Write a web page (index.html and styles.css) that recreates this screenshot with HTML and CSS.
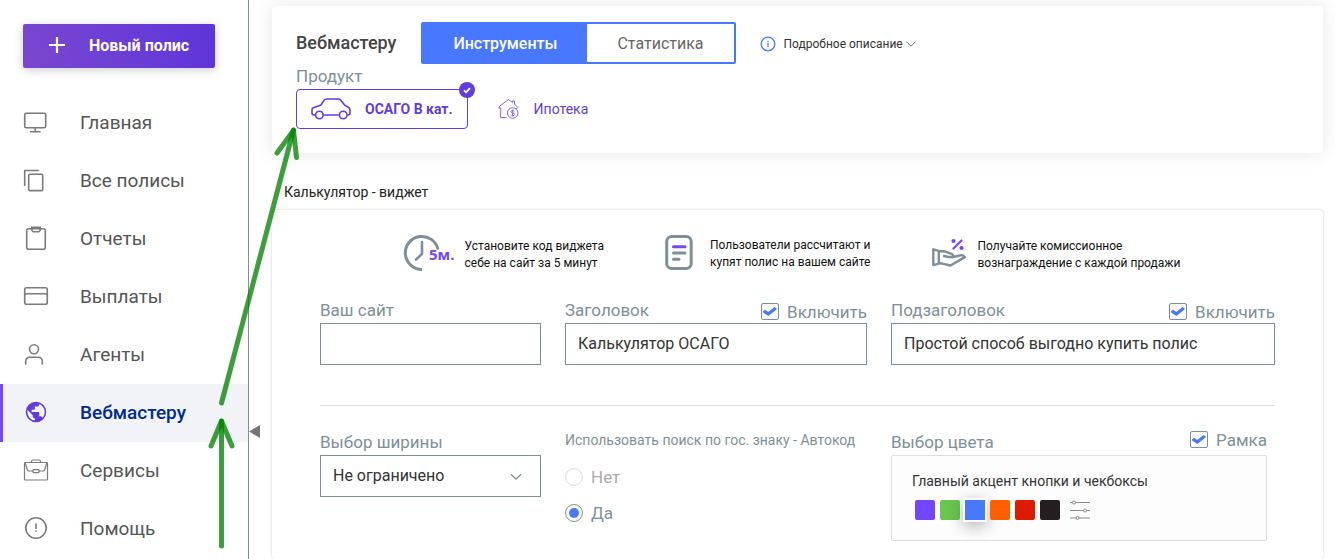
FILE: index.html
```html
<!DOCTYPE html>
<html lang="ru">
<head>
<meta charset="utf-8">
<meta name="viewport" content="width=device-width, initial-scale=1">
<title>Вебмастеру</title>
<link rel="stylesheet" href="styles.css">
</head>
<body>
<div class="layout">
  <aside class="sidebar">
    <button class="new-policy" type="button">
      <svg width="18" height="18" viewBox="0 0 18 18" fill="none" stroke="#fff" stroke-width="2.200"><path d="M9 1v16M1 9h16"/></svg>
      Новый полис
    </button>
    <nav class="nav">
      <a class="nav-item" href="#">
        <svg class="nav-icon" width="26" height="26" viewBox="0 0 26 26"><rect x="1.700" y="4.200" width="21" height="14.600" rx="1.500"/><path d="M12.200 19v3.500M7.500 22.800h9.500"/></svg>Главная</a>
      <a class="nav-item" href="#">
        <svg class="nav-icon" width="26" height="26" viewBox="0 0 26 26"><rect x="5.700" y="7.200" width="14" height="16.400" rx="1.200"/><path d="M1.700 18.500V3.500h13.500"/></svg>Все полисы</a>
      <a class="nav-item" href="#">
        <svg class="nav-icon" width="26" height="26" viewBox="0 0 26 26"><rect x="3.700" y="3.800" width="18.600" height="20.400" rx="2"/><path d="M8.800 2.400h8.400v2.800l-1.400 1.600h-5.600L8.800 5.200z"/></svg>Отчеты</a>
      <a class="nav-item" href="#">
        <svg class="nav-icon" width="26" height="26" viewBox="0 0 26 26"><rect x="1.700" y="4.700" width="22.600" height="16.600" rx="2"/><path d="M2 10.800h22"/></svg>Выплаты</a>
      <a class="nav-item" href="#">
        <svg class="nav-icon" width="26" height="26" viewBox="0 0 26 26"><circle cx="11" cy="8.300" r="4.500"/><path d="M2.700 23v-2.800a4 4 0 0 1 4-4h8.600a4 4 0 0 1 4 4V23"/></svg>Агенты</a>
      <a class="nav-item nav-item-active" href="#" aria-current="page">
        <svg class="nav-icon nav-icon-solid" width="26" height="26" viewBox="0 0 24 24"><path d="M12 2.500a9.500 9.500 0 1 0 0 19 9.500 9.500 0 0 0 0-19zm-1 17.400a7.900 7.900 0 0 1-7-7.900c0-.6.1-1.200.2-1.800L9 15v1c0 1.100.9 2 2 2v1.900zm6.900-2.500c-.3-.8-1-1.400-1.900-1.400h-1v-3c0-.6-.4-1-1-1H8v-2h2c.6 0 1-.4 1-1V7h2c1.100 0 2-.9 2-2v-.4a8 8 0 0 1 2.900 12.800z"/></svg>Вебмастеру</a>
      <a class="nav-item" href="#">
        <svg class="nav-icon nav-icon-thin" width="26" height="26" viewBox="0 0 26 26"><rect x="1.500" y="5.500" width="23" height="17.500" rx="1"/><path d="M8.500 5.500V4.300a1.300 1.300 0 0 1 1.300-1.300h6.400a1.300 1.300 0 0 1 1.300 1.300v1.200M2 5.500l2.300 7.300c.3.900.9 1.200 1.800 1.200H10M24 5.500l-2.300 7.300c-.3.900-.9 1.200-1.800 1.200H16"/><rect x="10" y="12.700" width="6" height="3" rx=".8"/></svg>Сервисы</a>
      <a class="nav-item" href="#">
        <svg class="nav-icon nav-icon-help" width="26" height="26" viewBox="0 0 26 26"><circle cx="13" cy="13" r="10.200"/><path d="M13 8.500v5.500M13 15.500v1.600"/></svg>Помощь</a>
    </nav>
    <button class="collapse" type="button" aria-label="Свернуть меню"></button>
  </aside>

  <main class="main">
    <section class="card header-card">
      <div class="header-row">
        <h1 class="title">Вебмастеру</h1>
        <div class="tabs">
          <button class="tab tab-active" type="button">Инструменты</button>
          <button class="tab" type="button">Статистика</button>
        </div>
        <button class="details" type="button">
          <svg width="16" height="16" viewBox="0 0 16 16" fill="none" stroke="#4778ff" stroke-width="1.300"><circle cx="8" cy="8" r="6.800"/><path d="M8 7v4.200M8 4.800v1.400"/></svg>
          <span>Подробное описание</span>
          <svg class="details-chevron" width="10" height="6" viewBox="0 0 10 6" fill="none" stroke="#777" stroke-width="1"><path d="M.5.700l4.500 4.500L9.500.700"/></svg>
        </button>
      </div>
      <p class="product-label">Продукт</p>
      <div class="products">
        <button class="product product-active" type="button">
          <svg width="40" height="22" viewBox="0 0 40 22" fill="none" stroke="#613ddb" stroke-width="1.600" stroke-linejoin="round"><path d="M4.300 17H3Q1 17 1 15v-3.200Q1 10 3 9.500L10 7l3-4.600Q14 1 15.700 1h11.600q1.500 0 2.500 1.200L34 7.400l3.300 1.800Q39 10.200 39 12v3q0 2-2 2h-.7M12.500 17h15.300"/><circle cx="8.400" cy="17" r="3.800"/><circle cx="32.200" cy="17" r="3.800"/></svg>
          ОСАГО В кат.
          <span class="badge"><svg width="16" height="16" viewBox="0 0 16 16" fill="none" stroke="#fff" stroke-width="1.800"><path d="M5 8.300l2 2 4-4.200"/></svg></span>
        </button>
        <button class="product" type="button">
          <svg width="22" height="22" viewBox="0 0 22 22" fill="none" stroke="#8267e2" stroke-width="1"><path d="M8.500 19.500H2.700V10H.8l1-2L10.500 1.500 14.500 4.500V3h2v3l3.300 3.500-.7 1H17"/><circle cx="14.700" cy="15" r="5.300"/><path d="M16.500 13.300q-.7-.8-1.800-.8-1.700 0-1.700 1.200t1.700 1.300q1.900.2 1.900 1.400 0 1.300-1.900 1.300-1.300 0-1.900-1M14.700 11.500v7"/></svg>
          Ипотека
        </button>
      </div>
    </section>

    <h2 class="section-title">Калькулятор - виджет</h2>

    <form class="card widget-card">
      <div class="features">
        <div class="feature">
          <svg width="54" height="38" viewBox="0 0 54 38"><path d="M19 35.400A16.500 16.500 0 1 1 35 15.500" fill="none" stroke="#7e9097" stroke-width="3"/><path d="M19 8v12l-6 5.500" fill="none" stroke="#7e9097" stroke-width="2.600" stroke-linecap="round"/><text class="clock-text" x="26" y="26">5м.</text></svg>
          <p>Установите код виджета<br>себе на сайт за 5 минут</p>
        </div>
        <div class="feature feature-page">
          <svg width="28" height="38" viewBox="0 0 28 38" fill="none" stroke="#7e9097" stroke-width="3" stroke-linecap="round"><rect x="1.700" y="2.500" width="24.500" height="32" rx="5"/><path d="M8.500 19H20M8.500 25.300H14"/><path d="M8.500 12.700H20" stroke="#7345ff"/></svg>
          <p>Пользователи рассчитают и<br>купят полис на вашем сайте</p>
        </div>
        <div class="feature feature-hand">
          <svg width="36" height="38" viewBox="0 0 36 38" fill="none" stroke="#7e9097" stroke-width="2.400" stroke-linejoin="round" stroke-linecap="round"><path d="M2.300 15.300v15.800l5.500-1.400V16.800zM8 17.200h5l7.500 2.600q2.500 1.300 1.500 3.200h-4.500l-4.500-1M22 23l7.500-1.700q3-.5 4.300 1.800L19.500 31.500 8 28.800"/><g stroke="#7345ff" stroke-width="2.200"><path d="M22.500 14.500l8-8"/><circle cx="22.500" cy="7" r="1"/><circle cx="30.500" cy="14" r="1"/></g></svg>
          <p>Получайте комиссионное<br>вознаграждение с каждой продажи</p>
        </div>
      </div>

      <div class="fields">
        <div class="field">
          <div class="field-head"><label class="field-label" for="site">Ваш сайт</label></div>
          <input class="control" id="site" type="text">
        </div>
        <div class="field">
          <div class="field-head"><label class="field-label" for="heading">Заголовок</label>
            <label class="check"><input type="checkbox" checked>Включить</label></div>
          <input class="control" id="heading" type="text" value="Калькулятор ОСАГО">
        </div>
        <div class="field">
          <div class="field-head"><label class="field-label" for="subheading">Подзаголовок</label>
            <label class="check"><input type="checkbox" checked>Включить</label></div>
          <input class="control" id="subheading" type="text" value="Простой способ выгодно купить полис">
        </div>
      </div>

      <hr class="divider">

      <div class="fields">
        <div class="field">
          <div class="field-head"><label class="field-label" for="width">Выбор ширины</label></div>
          <div class="select-wrap">
            <select class="control" id="width"><option>Не ограничено</option></select>
            <svg class="select-chevron" width="12" height="8" viewBox="0 0 12 8" fill="none" stroke="#7e8a90" stroke-width="1.300"><path d="M1 1.200l5 5 5-5"/></svg>
          </div>
        </div>
        <fieldset class="radios">
          <legend>Использовать поиск по гос. знаку - Автокод</legend>
          <label class="radio radio-off"><input type="radio" name="autocode">Нет</label>
          <label class="radio"><input type="radio" name="autocode" checked>Да</label>
        </fieldset>
        <div class="field color-field">
          <div class="field-head"><span class="field-label">Выбор цвета</span>
            <label class="check check-frame"><input type="checkbox" checked>Рамка</label></div>
          <div class="color-box">
            <p>Главный акцент кнопки и чекбоксы</p>
            <div class="swatches">
              <button class="swatch violet" type="button" aria-label="Фиолетовый"></button>
              <button class="swatch green" type="button" aria-label="Зелёный"></button>
              <button class="swatch blue" type="button" aria-label="Синий"></button>
              <button class="swatch orange" type="button" aria-label="Оранжевый"></button>
              <button class="swatch red" type="button" aria-label="Красный"></button>
              <button class="swatch black" type="button" aria-label="Чёрный"></button>
              <button class="tune" type="button" aria-label="Настроить цвет">
                <svg width="20" height="20" viewBox="0 0 20 20" fill="none" stroke="#888" stroke-width="1"><path d="M0 2.500h2.500M5.500 2.500H20M0 10.500h13.500M16.500 10.500H20M0 18h6M9 18h11"/><circle cx="4" cy="2.500" r="1.500"/><circle cx="15" cy="10.500" r="1.500"/><circle cx="7.500" cy="18" r="1.500"/></svg>
              </button>
            </div>
          </div>
        </div>
      </div>
    </form>
  </main>
</div>

<svg class="arrows" width="310" height="559" viewBox="0 0 310 559" aria-hidden="true">
  <path d="M221.500 403L293.500 130"/>
  <path d="M277 153l16.500-22.500L296.500 157.500"/>
  <path d="M221.500 546V421"/>
  <path d="M211 446l10.500-25L232 446"/>
</svg>
</body>
</html>
```
FILE: styles.css
```css
* { box-sizing: border-box; }

body {
  margin: 0;
  font-family: Roboto, "Liberation Sans", sans-serif;
  font-size: 16px;
  color: #444;
  background: #fff;
}

h1, h2, p { margin: 0; font-weight: 400; }

button, input, select { font: inherit; color: inherit; margin: 0; }

button { border: 0; padding: 0; background: none; }

svg { flex: none; display: block; }

.layout { display: flex; height: 100vh; overflow: hidden; }

/* Sidebar */
.sidebar {
  position: relative;
  flex: none;
  width: 249px;
  border-right: 1px solid #7e9097;
}

.new-policy {
  display: flex;
  align-items: center;
  gap: 23px;
  width: 192px;
  height: 44px;
  margin: 24px 0 26px 23px;
  padding: 0 0 2px 25px;
  border-radius: 2px;
  color: #fff;
  font-weight: 700;
  background: linear-gradient(70deg, #7a48cf, #5d34da);
  box-shadow: 0 2px 10px rgba(0, 0, 0, .2);
}

.nav-item {
  display: flex;
  align-items: center;
  gap: 31px;
  height: 58px;
  padding: 0 0 2px 23px;
  font-size: 19px;
  color: #555;
  text-decoration: none;
}

.nav-item-active {
  padding-left: 20px;
  border-left: 3px solid #7345ff;
  background: #f1f3f7;
  color: #002a8c;
  font-weight: 500;
}

.nav-icon { fill: none; stroke: #7b7b7b; stroke-width: 1.600; stroke-linecap: round; }
.nav-icon-thin { stroke-width: 1.200; }
.nav-icon-help { stroke-linecap: butt; }
.nav-icon-solid { fill: #613ddb; stroke: none; }

.collapse {
  position: absolute;
  top: 425px;
  right: -12px;
  width: 11px;
  height: 13px;
  background: #757575;
  clip-path: polygon(0 50%, 100% 0, 100% 100%);
}

/* Main */
.main {
  flex: 1;
  min-width: 0;
  display: flex;
  flex-direction: column;
  padding: 6px 12px 0 23px;
}

.card { background: #fff; border-radius: 4px; }

.header-card {
  padding: 16px 24px 24px;
  box-shadow: 0 0 20px rgba(0, 0, 0, .1);
}

.header-row { display: flex; align-items: center; }

.title { font-size: 18px; font-weight: 500; line-height: 42px; }

.tabs {
  display: flex;
  margin: 0 24px 0 25px;
  border: 2px solid #4778ff;
  border-radius: 2px;
}

.tab { height: 38px; padding: 0 30px; color: #666; }
.tab-active { background: #4778ff; color: #fff; font-weight: 500; }

.details { display: flex; align-items: center; padding-top: 2px; font-size: 12px; color: #333; }
.details span { margin: 0 3px 0 8px; }

.product-label { font-size: 17px; line-height: 25px; color: #7e9097; }

.products { display: flex; gap: 15px; }

.product {
  position: relative;
  display: flex;
  align-items: center;
  gap: 14px;
  height: 40px;
  padding: 0 14px;
  border: 1px solid transparent;
  border-radius: 4px;
  font-size: 14px;
  color: #613ddb;
}

.product-active { border-color: #613ddb; font-weight: 700; }

.badge {
  position: absolute;
  top: -8px;
  right: -8px;
  border-radius: 50%;
  background: #613ddb;
}

.section-title {
  margin: 27px 12px 5px;
  font-size: 14px;
  line-height: 25px;
  color: #222;
}

.widget-card {
  flex: 1 0 auto;
  padding: 24px 48px 0;
  box-shadow: 0 0 3px rgba(0, 0, 0, .2);
}

/* Features */
.features {
  display: flex;
  justify-content: center;
  gap: 61px;
  margin-bottom: 28px;
  padding-right: 12px;
  color: #111;
  font-size: 12px;
  line-height: 17px;
}

.feature { display: flex; align-items: center; gap: 8px; }
.feature p { padding-top: 4px; }
.feature-page { gap: 17px; }
.feature-page p { padding-top: 2px; }
.feature-hand { gap: 10px; }

.clock-text { font: 700 15px "Open Sans", sans-serif; fill: #7345ff; }

/* Form */
.fields {
  display: grid;
  grid-template-columns: 221fr 302fr 384fr;
  gap: 24px;
}

.field-head {
  display: flex;
  justify-content: space-between;
  align-items: center;
  height: 23px;
  font-size: 17px;
  line-height: 20px;
  color: #7e9097;
}

.field-label { padding-bottom: 4px; }

.check { display: flex; align-items: center; gap: 8px; }
.check-frame { padding-bottom: 8px; }

.check input {
  appearance: none;
  width: 18px;
  height: 17px;
  border: 1px solid #7e9097;
  border-radius: 2px;
}

.check input:checked::before {
  content: "";
  display: block;
  width: 14px;
  height: 11px;
  margin: 2px 1px;
  background: #4778ff;
  clip-path: polygon(0 48%, 15% 33%, 37% 55%, 82% 10%, 96% 20%, 96% 32%, 38% 92%, 0 58%);
}

.control {
  display: block;
  width: 100%;
  height: 42px;
  padding: 0 12px 2px;
  border: 1px solid #7e9097;
  border-radius: 0;
  background: #fff;
  color: #333;
  appearance: none;
}

.divider { margin: 40px 0 26px; border: 0; border-top: 1px solid #ddd; }

.select-wrap { position: relative; }

.select-chevron {
  position: absolute;
  right: 19px;
  top: 18px;
  pointer-events: none;
}

.radios { margin: 0; padding: 0; border: 0; min-width: 0; color: #7e9097; }
.radios legend { padding: 0; font-size: 14px; line-height: 16px; white-space: nowrap; }

.radio {
  display: flex;
  align-items: center;
  gap: 8px;
  height: 36px;
  font-size: 17px;
}

.radios legend + .radio { margin-top: 11px; }

.radio input {
  appearance: none;
  display: flex;
  align-items: center;
  justify-content: center;
  width: 18px;
  height: 18px;
  border: 1px solid #7e9097;
  border-radius: 50%;
}

.radio input:checked::before {
  content: "";
  width: 10px;
  height: 10px;
  border-radius: 50%;
  background: #4778ff;
}

.radio-off { color: #aaa; }
.radio-off input { border-color: #ddd; }

.color-field { padding-right: 8px; }

.color-box {
  height: 86px;
  padding: 15px 20px;
  border: 1px solid #ddd;
  border-radius: 2px;
  background: #fdfdfd;
  color: #333;
  font-size: 14px;
  line-height: 20px;
}

.swatches { display: flex; gap: 5px; padding: 9px 3px 0; }

.swatch { width: 20px; height: 20px; border-radius: 2px; }
.violet { background: #7345ff; }
.green { background: #6ac64e; }
.blue {
  background: #4778ff;
  border-radius: 0;
  box-shadow: 0 0 0 2px #fff, 0 4px 16px 2px rgba(0, 0, 0, .3);
}
.orange { background: #ff5f00; }
.red { background: #dc1b00; }
.black { background: #231f20; }
.tune { margin-left: 5px; }

/* Pointer arrows drawn over the page */
.arrows {
  position: absolute;
  top: 0;
  left: 0;
  pointer-events: none;
  fill: none;
  stroke: rgba(0, 128, 0, .76);
  stroke-width: 5;
  stroke-linecap: round;
  stroke-linejoin: round;
}
```
